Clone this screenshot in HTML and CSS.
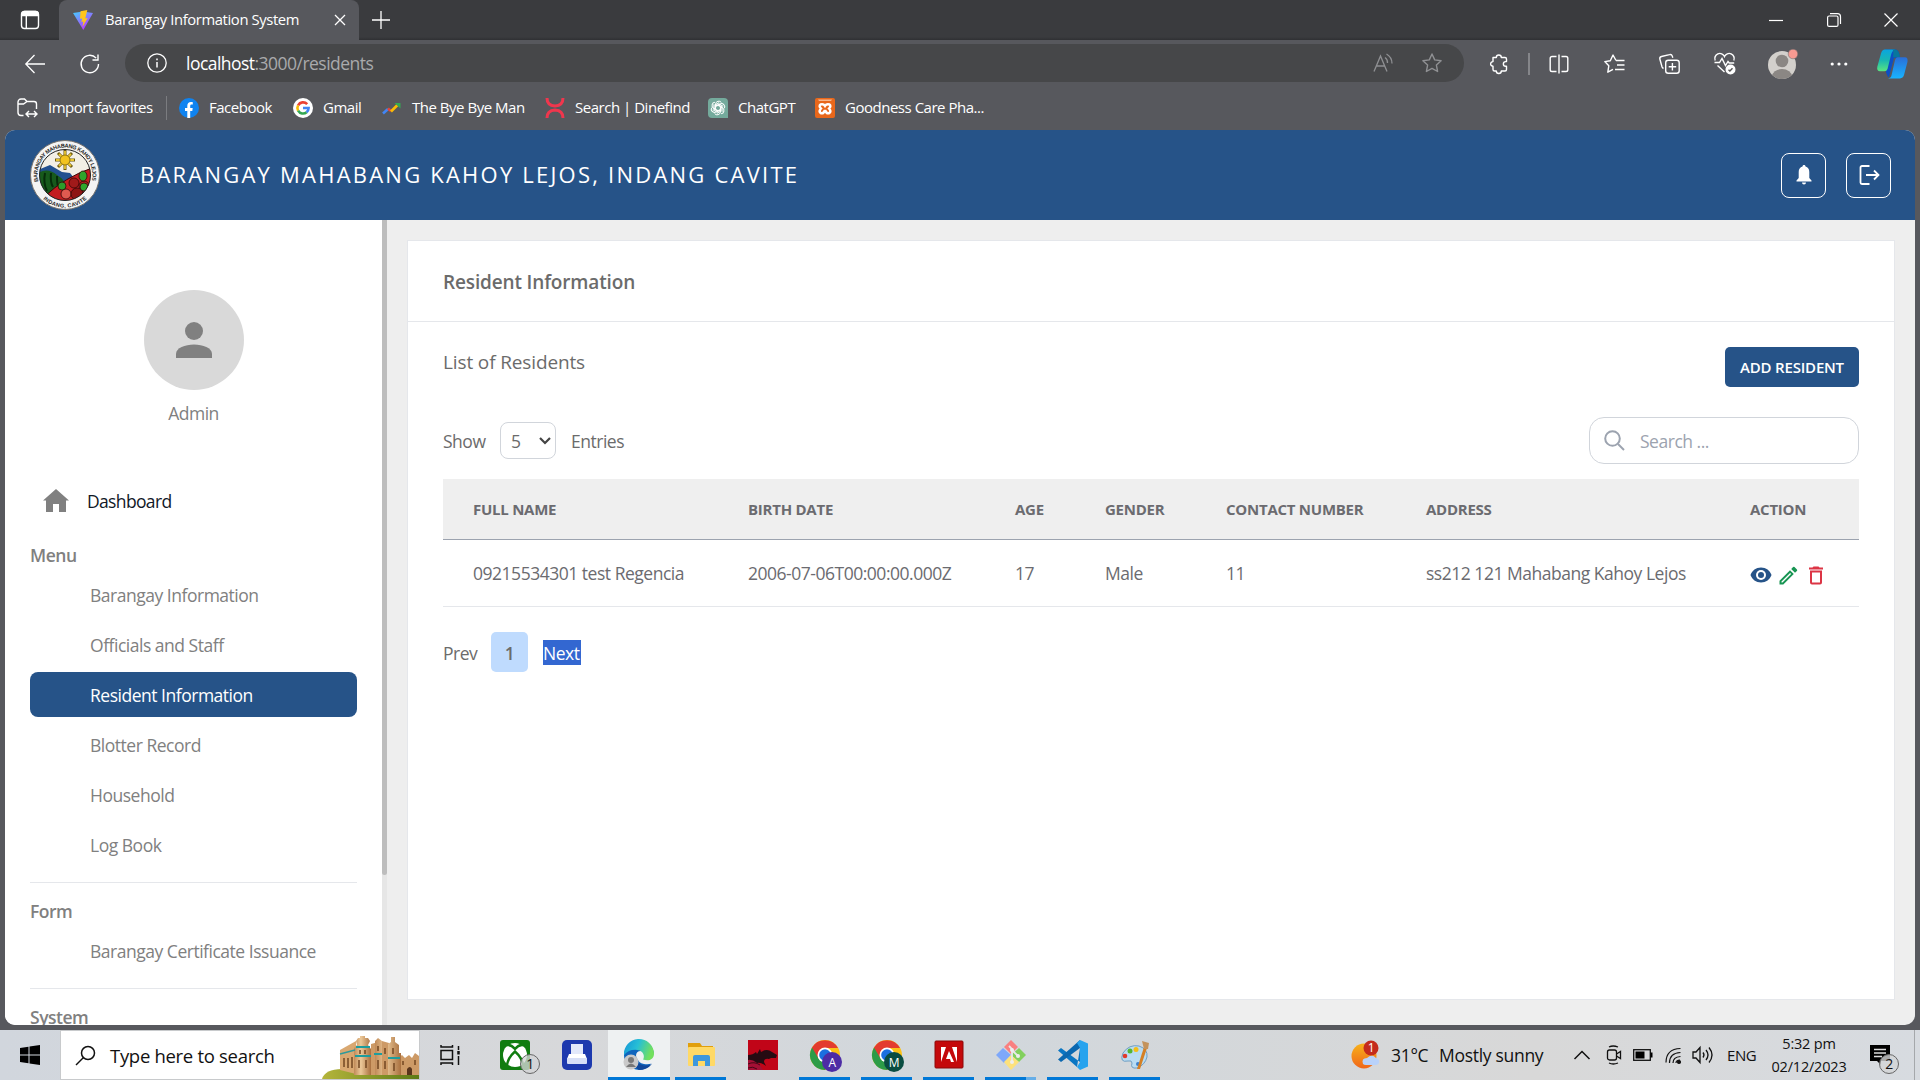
FILE: index.html
```html
<!DOCTYPE html>
<html lang="en">
<head>
<meta charset="utf-8">
<title>Barangay Information System</title>
<link rel="stylesheet" href="styles.css">
</head>
<body>
<div class="browser">
  <div class="tabstrip">
    <svg class="tab-actions" width="20" height="20" viewBox="0 0 20 20" fill="none" stroke="#fff" stroke-width="1.4"><rect x="1.5" y="1.5" width="17" height="17" rx="3"/><path d="M2 5.5V4a2.5 2.500 0 0 1 2.500-2.500h11A2.500 2.500 0 0 1 18 4v1.500z" fill="#fff"/><path d="M6.300 5v13"/></svg>
    <div class="tab">
      <svg width="20" height="20" viewBox="0 0 20 20"><defs><linearGradient id="vite" x1="0" y1="0" x2=".6" y2="1"><stop offset="0" stop-color="#41d1ff"/><stop offset="1" stop-color="#bd34fe"/></linearGradient></defs><path d="M0 3l10-1.500L20 3 10.300 20z" fill="url(#vite)"/><path d="M14.300 0L7.500 1.300l-.5 7.500 2.200-.4-.8 3.600 2-.5-1 5.500 5.300-9-2.400.5z" fill="#ffc51c"/></svg>
      <span class="tab-title">Barangay Information System</span>
      <svg class="tab-close" width="12" height="12" viewBox="0 0 12 12" stroke="#fff" stroke-width="1.300"><path d="M1 1l10 10M11 1L1 11"/></svg>
    </div>
    <svg class="new-tab" width="18" height="18" viewBox="0 0 18 18" stroke="#fff" stroke-width="1.300"><path d="M9 0v18M0 9h18"/></svg>
    <div class="window-buttons">
      <svg width="14" height="14" viewBox="0 0 14 14" stroke="#fff" stroke-width="1.200"><path d="M0 7.500h14"/></svg>
      <svg width="14" height="14" viewBox="0 0 14 14" fill="none" stroke="#fff" stroke-width="1.200"><rect x=".6" y="3" width="10.400" height="10.400" rx="1.500"/><path d="M3 .7h7.500a3 3 0 0 1 3 3V11"/></svg>
      <svg width="14" height="14" viewBox="0 0 14 14" stroke="#fff" stroke-width="1.200"><path d="M.5.5l13 13M13.500.5l-13 13"/></svg>
    </div>
  </div>

  <div class="toolbar">
    <svg class="nav-back" width="20" height="20" viewBox="0 0 20 20" fill="none" stroke="#fff" stroke-width="1.300"><path d="M20 10H1M9.500 1L.8 10l8.700 9"/></svg>
    <svg class="nav-reload" width="20" height="20" viewBox="0 0 20 20" fill="none" stroke="#fff" stroke-width="1.400"><path d="M18.500 10a8.700 8.700 0 1 1-2.300-5.900M18 .5v5.500h-5.500"/></svg>
    <div class="address">
      <svg width="20" height="20" viewBox="0 0 20 20" fill="none" stroke="#fff" stroke-width="1.300"><circle cx="10" cy="10" r="9.200"/><path d="M10 9v5.500M10 5.500v1.700" stroke-width="1.500"/></svg>
      <span class="url"><span class="host">localhost</span>:3000/residents</span>
      <svg class="read-aloud" width="22" height="20" viewBox="0 0 22 20" fill="none" stroke="#8f9093" stroke-width="1.300"><path d="M1 18.500L7.500 3 14 18.500M3.300 13h8.500M12 4.500a6 6 0 0 1 2.500 5.500M13.500 1a11 11 0 0 1 5.500 9.500"/></svg>
      <svg width="20" height="20" viewBox="0 0 20 20" fill="none" stroke="#8f9093" stroke-width="1.400" stroke-linejoin="round"><path d="M10 1l2.700 5.900 6.400.8-4.700 4.400 1.200 6.400L10 15.400l-5.600 3.100 1.200-6.400L.9 7.700l6.400-.8z"/></svg>
    </div>
    <div class="tools">
      <svg class="extensions" width="20" height="22" viewBox="0 0 20 22" fill="none" stroke="#fff" stroke-width="1.400" stroke-linejoin="round"><path d="M4 4.500h3.300a2.500 2.500 0 0 1 5 0H16q1.500 0 1.500 1.500v2.600h-.8a2.300 2.300 0 0 0 0 4.700h.8v3.200q0 1.500-1.500 1.500h-3.700a2.500 2.500 0 0 1-5 0H5.500Q4 18 4 16.500v-3.200a2.300 2.300 0 1 1 0-4.700z"/></svg>
      <i class="tool-divider"></i>
      <svg class="split" width="20" height="20" viewBox="0 0 20 20" fill="none" stroke="#fff" stroke-width="1.400"><path d="M7.500 2.500H3A1.800 1.800 0 0 0 1.200 4.300v11.400A1.800 1.800 0 0 0 3 17.500h4.500M12.500 2.500H17a1.800 1.800 0 0 1 1.800 1.800v11.400a1.800 1.800 0 0 1-1.800 1.800h-4.500M10 .5v19"/></svg>
      <svg class="starred" width="21" height="20" viewBox="0 0 21 20" fill="none" stroke="#fff" stroke-width="1.400" stroke-linejoin="round"><path d="M12 6.500L9 1 6.300 6.800.8 7.600l4 4.200-1 6.400L9 15.300M12 6.500h8.500M13 11h7.500M11 15.500h9.500"/></svg>
      <svg class="collections" width="21" height="20" viewBox="0 0 21 20" fill="none" stroke="#fff" stroke-width="1.400"><rect x="6.700" y="6.200" width="13.500" height="13" rx="2.500"/><path d="M13.400 9v7.500M9.700 12.700h7.500M4.500 14.500A3 3 0 0 1 3 12.800L.9 5.300A2.300 2.300 0 0 1 2.500 2.500l8-1.900a2.300 2.300 0 0 1 2.800 1.500l.5 1.700"/></svg>
      <svg class="essentials" width="22" height="22" viewBox="0 0 22 22" fill="none" stroke="#fff" stroke-width="1.400"><path d="M1.200 7.500A5 5 0 0 1 10.500 3.500 5 5 0 0 1 19.800 7.500M.5 9.500h5L8 5.500l3.500 7 2.500-4 1.200 1.500h5M3.500 12.500l7 6.500"/><circle cx="16.500" cy="16.500" r="4.300" fill="#fff"/><path d="M14.500 16.700l1.400 1.300 2.600-2.800" stroke="#555"/></svg>
      <svg class="profile-face" width="30" height="32" viewBox="0 0 30 32"><defs><clipPath id="face"><circle cx="14" cy="17" r="14"/></clipPath></defs><circle cx="14" cy="17" r="14" fill="#d3d0cc"/><g clip-path="url(#face)" fill="#8b8784"><circle cx="14" cy="13" r="6.300"/><ellipse cx="14" cy="28.500" rx="10" ry="7.500"/></g><circle cx="25" cy="6" r="4.800" fill="#f79a92" stroke="#666" stroke-width=".5"/></svg>
      <svg class="more" width="18" height="6" viewBox="0 0 18 6" fill="#fff"><circle cx="2.200" cy="3" r="1.600"/><circle cx="9" cy="3" r="1.600"/><circle cx="15.800" cy="3" r="1.600"/></svg>
      <svg class="copilot" width="31" height="30" viewBox="0 0 31 27" preserveAspectRatio="none"><defs><linearGradient id="cpa" x1="0" y1="0" x2="0" y2="1"><stop offset="0" stop-color="#0aa5e0"/><stop offset=".5" stop-color="#19b7b2"/><stop offset="1" stop-color="#5be57f"/></linearGradient><linearGradient id="cpb" x1="0" y1="0" x2="0" y2="1"><stop offset="0" stop-color="#2a6ed8"/><stop offset="1" stop-color="#18b4ff"/></linearGradient></defs><path d="M8 .5h11q3 .5 4 7l-6 .5-5 17q-1 1.500-3-4L9 17z" fill="#0d4fc4"/><path d="M8 .5h10q-3 1-4 5L10.500 18q-.8 2-3 2H3q-3.500 0-2.700-4L4 4Q5 .5 8 .5z" fill="url(#cpa)"/><path d="M18 .5q4 0 5 7h-7q1-7-1-7z" fill="#08779d"/><path d="M20.500 7.500H28q3 0 2.500 4L27 23.500q-1 3-4 3H11q3 0 3.600-3L18 10q.8-2.500 2.500-2.500z" fill="url(#cpb)"/></svg>
    </div>
  </div>

  <div class="favorites">
    <div class="fav f1"><svg width="21" height="20" viewBox="0 0 21 20" fill="none" stroke="#fff" stroke-width="1.400"><path d="M6.500 17.500H4A3 3 0 0 1 1 14.500V4A3 3 0 0 1 4 1h3.500L10 3.500h7A2.500 2.500 0 0 1 19.500 6v5M1 6h5.500L10 3.500M9 16h11M12 13l-3 3 3 3M17 13l3 3-3 3"/></svg><span>Import favorites</span></div>
    <i class="fav-divider"></i>
    <div class="fav f2"><svg width="20" height="20" viewBox="0 0 20 20"><circle cx="10" cy="10" r="10" fill="#0f83f0"/><path d="M8.300 20v-7H6v-3h2.300V8c0-2.500 1.400-3.900 3.600-3.900 1 0 1.900.2 1.900.2v2.300h-1.200c-1.100 0-1.400.7-1.400 1.500V10h2.500l-.4 3h-2.100v7z" fill="#fff"/></svg><span>Facebook</span></div>
    <div class="fav f3"><svg width="20" height="20" viewBox="0 0 20 20" fill="none" stroke-width="2.600"><circle cx="10" cy="10" r="10" fill="#fff"/><path d="M14.200 6.200A5.600 5.600 0 0 0 5.100 7.300" stroke="#ea4335"/><path d="M5.100 7.300a5.600 5.600 0 0 0 0 5.400" stroke="#fbbc05"/><path d="M5.100 12.700a5.600 5.600 0 0 0 8.500 1.500" stroke="#34a853"/><path d="M13.600 14.200a5.600 5.600 0 0 0 2-4.200H10" stroke="#4285f4"/></svg><span>Gmail</span></div>
    <div class="fav f4"><svg width="20" height="20" viewBox="0 0 20 20" fill="none" stroke-width="2.600"><path d="M1 15.500l5-4.500" stroke="#4285f4"/><path d="M6 10.500l3 2.500" stroke="#ea4335"/><path d="M9 13.500l6.500-6.500" stroke="#fbbc05"/><path d="M12.500 5h6v5.500" fill="#34a853" stroke="none"/></svg><span>The Bye Bye Man</span></div>
    <div class="fav f5"><svg width="20" height="20" viewBox="0 0 20 20" fill="none" stroke="#f0364d" stroke-width="3"><path d="M2 0Q2 7.500 10 8 18 7.500 18 0M2 20q0-7.500 8-8 8 .5 8 8"/></svg><span>Search | Dinefind</span></div>
    <div class="fav f6"><svg width="20" height="20" viewBox="0 0 20 20" fill="none" stroke="#fff" stroke-width="1"><path d="M4 0h12a4 4 0 0 1 4 4v16H4a4 4 0 0 1-4-4V4a4 4 0 0 1 4-4z" fill="#74aa9c" stroke="none"/><g id="knot"><path id="petal" d="M7.600 11.400V6.100a3.200 3.200 0 0 1 5.800-1.600M7.600 8l3.600-2 4 2.300"/><use href="#petal" transform="rotate(60 10 10)"/><use href="#petal" transform="rotate(120 10 10)"/></g><use href="#knot" transform="rotate(180 10 10)"/></svg><span>ChatGPT</span></div>
    <div class="fav f7"><svg width="20" height="20" viewBox="0 0 20 20" fill="none"><rect width="20" height="20" rx="2" fill="#e8671b"/><path d="M3 1.500h14L16 3H4z" fill="#f7b78c"/><path d="M5.500 6.500q3-1 4.500 1.500 1.500-2.500 4.500-1.500 2 1.500-.5 4 2.500 2.500.5 4.500-3 1-4-2h-1q-1 3-4 2-2-2 .5-4.500-2.500-2.500-.5-4z" stroke="#fff" stroke-width="2.400"/></svg><span>Goodness Care Pha...</span></div>
  </div>

  <div class="page">
    <header class="site-header">
      <svg class="seal" width="70" height="70" viewBox="0 0 70 70"><defs><clipPath id="inner"><circle cx="35" cy="35" r="25.500"/></clipPath><path id="arcTop" d="M8.500 42.500A27.500 27.500 0 1 1 61.500 42.500"/><path id="arcBottom" d="M9 54.500A32.500 32.500 0 0 0 61 54.500"/></defs>
        <circle cx="35" cy="35" r="34.500" fill="#f4f4f4" stroke="#77736e"/>
        <g clip-path="url(#inner)"><rect width="70" height="70" fill="#f3efe6"/><path d="M8 30l12-5 12 7 8 1 4 5v30H8z" fill="#22508f"/><path d="M8 33q10-6 19 2 8 5 8 10L22 62H8z" fill="#175a1c"/><path d="M15 33q-2 10 2 18M21 33q-1 9 2 14M27 36q0 8 1 10" stroke="#062c0a" stroke-width="2" fill="none"/><path d="M14 57Q35 37 62 28v34H22z" fill="#c31d20" stroke="#3a0808"/><g stroke="#350808" stroke-width=".8"><circle cx="44" cy="43" r="5" fill="#a01a1a"/><circle cx="54" cy="46" r="5" fill="#b51d1d"/><circle cx="36" cy="54" r="5" fill="#e05a50"/><circle cx="47" cy="54" r="6" fill="#8e1414"/><ellipse cx="53" cy="36" rx="4" ry="5" fill="#2fa52c"/><circle cx="32" cy="46" r="4" fill="#2c9c2b"/><ellipse cx="54" cy="47" rx="4" ry="4" fill="#2fa52c"/></g><path d="M35 10v20M25 20h20M28 13l14 14M42 13L28 27" stroke="#6d5a10" stroke-width="3"/><path d="M35 11v18M26 20h18M29 14l12 12M41 14L29 26" stroke="#e8c431" stroke-width="1.800"/><circle cx="35" cy="20" r="5" fill="#f2c31d" stroke="#8d7210"/></g>
        <circle cx="35" cy="35" r="25.500" fill="none" stroke="#222"/>
        <g class="seal-text"><text><textPath href="#arcTop" startOffset="1" textLength="98">BARANGAY MAHABANG KAHOY LEJOS</textPath></text><text><textPath href="#arcBottom" startOffset="6" textLength="48">INDANG, CAVITE</textPath></text></g></svg>
      <h1>BARANGAY MAHABANG KAHOY LEJOS, INDANG CAVITE</h1>
      <div class="header-button"><svg width="20" height="22" viewBox="0 0 20 22" fill="#fff"><path d="M10 1c1 0 1.500.7 1.500 1.600C14 3.300 15.300 5.500 15.300 8v6l2.200 2.500v1h-15v-1L4.700 14V8c0-2.500 1.300-4.700 3.800-5.400C8.500 1.700 9 1 10 1zM8 18.600h4a2 2 0 0 1-4 0z"/></svg></div>
      <div class="header-button"><svg width="22" height="22" viewBox="0 0 22 22" fill="none" stroke="#fff" stroke-width="1.800"><path d="M11.500 2H4a1.500 1.500 0 0 0-1.500 1.500v15A1.500 1.500 0 0 0 4 20h7.500M8 11h12M16 6.500l4.500 4.500-4.500 4.500"/></svg></div>
    </header>
    <div class="site-body">
      <aside class="sidebar">
        <div class="sidebar-content">
          <div class="avatar"><svg width="36" height="36" viewBox="0 0 36 36" fill="#808080"><circle cx="18" cy="9" r="9"/><path d="M0 36v-4c0-6 9-9.500 18-9.500S36 26 36 32v4z"/></svg></div>
          <p class="admin">Admin</p>
          <div class="dashboard"><svg width="26" height="23" viewBox="0 0 26 23" fill="#808080"><path d="M13 0l13 11.500h-3V23h-7v-8h-6v8H3V11.500H0z"/></svg><span>Dashboard</span></div>
          <h2 class="group">Menu</h2>
          <nav class="menu">
            <a>Barangay Information</a>
            <a>Officials and Staff</a>
            <a class="active">Resident Information</a>
            <a>Blotter Record</a>
            <a>Household</a>
            <a>Log Book</a>
          </nav>
          <hr>
          <h2 class="group second">Form</h2>
          <nav class="menu"><a>Barangay Certificate Issuance</a></nav>
          <hr>
          <h2 class="group second">System</h2>
        </div>
        <div class="scrollbar"><div class="thumb"></div></div>
      </aside>
      <main class="content">
        <section class="card">
          <h2 class="card-title">Resident Information</h2>
          <div class="card-body">
            <div class="list-head"><h3>List of Residents</h3><button class="add">ADD RESIDENT</button></div>
            <div class="filters">
              <span class="show">Show</span>
              <span class="select"><span>5</span><svg width="12" height="8" viewBox="0 0 12 8" fill="none" stroke="#444" stroke-width="2.200"><path d="M1 1l5 5 5-5"/></svg></span>
              <span class="entries">Entries</span>
              <div class="search"><svg width="21" height="21" viewBox="0 0 21 21" fill="none" stroke="#9ca3af" stroke-width="2"><circle cx="8.500" cy="8.500" r="7.300"/><path d="M14 14l6 6"/></svg><span>Search ...</span></div>
            </div>
            <table>
              <colgroup><col class="c1"><col class="c2"><col class="c3"><col class="c4"><col class="c5"><col class="c6"><col class="c7"></colgroup>
              <thead><tr><th>FULL NAME</th><th>BIRTH DATE</th><th>AGE</th><th>GENDER</th><th>CONTACT NUMBER</th><th>ADDRESS</th><th>ACTION</th></tr></thead>
              <tbody><tr><td>09215534301 test Regencia</td><td>2006-07-06T00:00:00.000Z</td><td>17</td><td>Male</td><td>11</td><td>ss212 121 Mahabang Kahoy Lejos</td>
                <td><div class="actions">
                  <svg width="22" height="16" viewBox="0 0 22 16"><path d="M11 .5C6 .5 2 3.600.5 8 2 12.400 6 15.500 11 15.500S20 12.400 21.500 8C20 3.600 16 .5 11 .5z" fill="#265388"/><circle cx="11" cy="8" r="5" fill="#fff"/><circle cx="11" cy="8" r="3" fill="#265388"/></svg>
                  <svg width="19" height="19" viewBox="0 0 19 19" fill="#189553"><path fill-rule="evenodd" d="M.5 14.700V18.500h3.800L14.800 8l-3.800-3.800zM3.500 16.600h-1v-1L11.100 7l1 1zM17.900 4.900a1 1 0 0 0 0-1.400L15.500 1.100a1 1 0 0 0-1.400 0l-1.900 1.900L16 6.800z"/></svg>
                  <svg width="14" height="19" viewBox="0 0 14 19" fill="#dc3545"><path fill-rule="evenodd" d="M1 16.500a2 2 0 0 0 2 2h8a2 2 0 0 0 2-2V4.500H1zM3 6.500h8v10H3zM10.500 1.500l-1-1h-5l-1 1H0v2h14v-2z"/></svg>
                </div></td></tr></tbody>
            </table>
            <div class="pager"><span class="prev">Prev</span><b>1</b><span class="next">Next</span></div>
          </div>
        </section>
      </main>
    </div>
  </div>
</div>

<footer class="taskbar">
  <div class="start"><svg width="20" height="20" viewBox="0 0 20 20"><path d="M0 3l8.500-1.200v7.700H0zM9.500 1.600L20 0v9.500H9.500zM0 10.500h8.500v7.700L0 17zM9.500 10.500H20V20L9.500 18.400z"/></svg></div>
  <div class="tb-search">
    <svg width="21" height="21" viewBox="0 0 21 21" fill="none" stroke="#111" stroke-width="1.500"><circle cx="13" cy="8" r="6.500"/><path d="M8.500 12.500L1 20"/></svg>
    <span>Type here to search</span>
    <svg class="castle" width="97" height="43" viewBox="0 0 97 43"><defs><linearGradient id="stone" x1="0" y1="0" x2="1" y2="0"><stop offset="0" stop-color="#c08a58"/><stop offset=".4" stop-color="#ecc999"/><stop offset="1" stop-color="#a9703f"/></linearGradient><linearGradient id="grass" x1="0" y1="0" x2="1" y2="0"><stop offset="0" stop-color="#b5b53c"/><stop offset="1" stop-color="#5d7a16"/></linearGradient></defs><path d="M0 43q3-10 20-10l77 5v5z" fill="url(#grass)"/><path d="M18 14l16-9v33l-16-4z" fill="#d9a871"/><path d="M49 8l11-3 7 2v32H49zM76 22l4-3 3 3 4-3 3 3 3-5 4 3v19H76z" fill="#cd9a66"/><path d="M34 5l2-3h2V0h5v2h3l2 3-2 4 3 4v26H32V12l3-3z" fill="url(#stone)"/><path d="M53 5l3-3 4 3v34h-7zM66 8l3-2V1h4v5l4 3v8h2v22H66z" fill="url(#stone)"/><path d="M34 11h14M33 20h16M52 18h8M66 22h12" stroke="#1d9d9e" stroke-width="1.800"/><path d="M18 18l15-4" stroke="#2d9a9b" stroke-width="1.500"/><path d="M22 22v9M26 22v10M30 21v11M38 14v4M43 14v4M37 24v8M44 24v8M56 10v5M63 12v6M71 12v6M56 24v9M72 27v8M63 25v8M81 25v4M93 24v5" stroke="#734722" stroke-width="1.500"/><path d="M85 39v-6q3-4 5 0v6z" fill="#59351c"/></svg>
  </div>
  <div class="task-view"><svg width="20" height="20" viewBox="0 0 20 20" fill="none" stroke="#111" stroke-width="1.500"><rect x="1" y="5.500" width="11.500" height="9"/><path d="M1 0v2h11.500V0M1 20v-2h11.500v2M18.500 1v4M18.500 11v9"/><path d="M18.500 6v3.500" stroke-width="2.500"/></svg></div>
  <div class="apps">
    <div class="app"><svg width="30" height="30" viewBox="0 0 30 30"><rect width="30" height="30" rx="3" fill="#107c10"/><circle cx="15" cy="15" r="12" fill="#fff"/><path d="M5.500 5.500q5-2 9.500 3.500Q19.500 3.500 24.500 5.500M7 26q.5-8 8-14.500Q22.500 18 23 26" fill="none" stroke="#107c10" stroke-width="2.400"/></svg><span class="badge">1</span></div>
    <div class="app"><svg width="30" height="30" viewBox="0 0 30 30"><rect width="30" height="30" rx="5" fill="#1d39ae"/><path d="M9 4h12v10H9z" fill="#e2e8fa"/><path d="M7 14h16l2 5H5z" fill="#fff"/><rect x="5" y="18" width="20" height="6" rx="1" fill="#d7dff7"/></svg></div>
    <div class="app current running"><svg width="30" height="30" viewBox="0 0 30 30"><defs><linearGradient id="ea" x1="0" y1="0" x2="1" y2=".3"><stop offset="0" stop-color="#1395d8"/><stop offset=".5" stop-color="#27bfd6"/><stop offset="1" stop-color="#72e05e"/></linearGradient></defs><circle cx="15" cy="15" r="15" fill="#0f65bd"/><path d="M12 16q0-5 5-5l13 3v8q-3 3-10 2-6-1-8-8z" fill="#eef1f2"/><path d="M0 15A15 15 0 0 1 30 13c.5 7-6 8.500-11 6.500C21 17 20 11 13.500 10Q5 9 0 15z" fill="url(#ea)"/><path d="M12 16q-1 8 8 9.500 5 .3 8-1.500Q23 30 15 30q-9-6-3-14z" fill="#10489b"/><circle cx="7" cy="22" r="7.500" fill="#c9c9c9"/><circle cx="7" cy="20" r="3" fill="#777"/><path d="M2 27q5-7 10 0z" fill="#777"/></svg></div>
    <div class="app running"><svg width="30" height="30" viewBox="0 0 30 30"><path d="M2 3h12l2 3h11v10H2z" fill="#e19f0c"/><rect x="2" y="7" width="27" height="19" rx="1" fill="#ffd966"/><path d="M7 26V17q0-2 2-2h13q2 0 2 2v9h-5v-5h-7v5z" fill="#3d97dd"/></svg></div>
    <div class="app"><svg width="30" height="30" viewBox="0 0 30 30"><rect width="30" height="30" fill="#c10518"/><path d="M0 20h9l6 10H0z" fill="#a50f35"/><path d="M0 15q5 0 8-3l1 2 3-5 1 3q6-4 11 0l5 3-1 3-5 0-2 1q-5-1-5 3l2 4q-5-4-9-3-5-4-9-3z" fill="#260b12"/><path d="M0 24q6-3 12 1M0 28q5-2 9 1" stroke="#470716" fill="none"/></svg></div>
    <div class="app running"><svg class="chrome" width="34" height="34" viewBox="0 0 34 34"><g id="chrome"><circle cx="16" cy="15" r="15" fill="#fbc116"/><path d="M16 15L3 7.500A15 15 0 0 0 16 30l7-11z" fill="#2c9c47"/><path d="M3 7.500A15 15 0 0 1 29 8H16l-6.500 10.500z" fill="#e33b2e"/><circle cx="16" cy="15" r="7.500" fill="#fff"/><circle cx="16" cy="15" r="5.800" fill="#1b6fe0"/></g><circle cx="23" cy="22" r="10" fill="#4d2ca5"/><text x="23" y="26.500" class="profile">A</text></svg></div>
    <div class="app running"><svg class="chrome" width="34" height="34" viewBox="0 0 34 34"><use href="#chrome"/><circle cx="23" cy="22" r="10" fill="#0a4d42"/><text x="23" y="26.500" class="profile">M</text></svg></div>
    <div class="app running"><svg width="30" height="30" viewBox="0 0 30 30"><rect x="1" y="1" width="28" height="27" rx="1" fill="#c4090b" stroke="#8c0808"/><path d="M7 22V7h5zM23 22V7h-5zM15 11l5 11h-3l-1-3h-4z" fill="#fff"/></svg></div>
    <div class="app running grouped"><svg width="30" height="30" viewBox="0 0 30 30"><path d="M15 0l7 7-7 7-7-7z" fill="#f98080"/><path d="M7 8l8 7-7 8-8-8z" fill="#7ea8fa"/><path d="M23 8l7 7-7 7-8-7z" fill="#82d05d"/><path d="M15 15l8 7-8 8-7-8z" fill="#fde17c"/><path d="M13 6l3 3v13M16 10l6 6" stroke="#e8e8e8" stroke-width="1.800" fill="none"/><circle cx="16" cy="10" r="2" fill="#eee"/><circle cx="16" cy="22" r="2" fill="#eee"/><circle cx="22" cy="16" r="2" fill="#eee"/></svg></div>
    <div class="app running"><svg width="30" height="30" viewBox="0 0 30 30"><path d="M22 8v14L3 8 0 10.500 19 27z" fill="#0a76c3"/><path d="M0 19.500L3 22 22 8V0L0 19.500z" fill="#0b68b0"/><path d="M22 0l8 3.500v23L22 30l-3-3 3-5V8l-3-5z" fill="#27a3ee"/></svg></div>
    <div class="app running"><svg width="30" height="30" viewBox="0 0 30 30"><path d="M3 13Q9 4 19 6q9 3 8 11-2 8-10 11-7 1-5-5 0-3-4-2-9 2-5-8z" fill="#b9dcf2" stroke="#6f9fc4"/><circle cx="5" cy="16" r="2.300" fill="#e23a2c"/><circle cx="10" cy="11" r="2.500" fill="#55b535"/><circle cx="16" cy="9.500" r="2.500" fill="#f3be18"/><circle cx="18" cy="24" r="2" fill="#3a80cf"/><path d="M24 7l3 1-7 21-3 0z" fill="#d58024"/><path d="M22 1l7 2-1 6-4 0z" fill="#c4935c"/></svg></div>
  </div>
  <div class="tray">
    <svg class="weather" width="30" height="30" viewBox="0 0 30 30"><defs><linearGradient id="sun" x1="0" y1="0" x2="0" y2="1"><stop offset="0" stop-color="#f7b21a"/><stop offset="1" stop-color="#f0661a"/></linearGradient></defs><circle cx="13" cy="16" r="12.500" fill="url(#sun)"/><path d="M12 24q-2-6 4-6 5-5 9 0 4 1 3 5-1 2-3 2H15q-2 0-3-1z" fill="#b9d2fa"/><circle cx="20" cy="8" r="7.500" fill="#c42b1c"/><text x="20" y="12" class="alert">1</text></svg>
    <span class="temp">31°C</span><span class="cond">Mostly sunny</span>
    <svg class="up" width="16" height="10" viewBox="0 0 16 10" fill="none" stroke="#111" stroke-width="1.500"><path d="M.5 9L8 1.500 15.500 9"/></svg>
    <svg class="cam" width="16" height="20" viewBox="0 0 16 20" fill="none" stroke="#111" stroke-width="1.300"><rect x="1.500" y="5" width="9" height="10" rx="2"/><path d="M10.500 9l4-2.500v7l-4-2.500M3 2q4-2 9 0M3 18q4 2 9 0"/></svg>
    <svg class="battery" width="20" height="12" viewBox="0 0 20 12"><rect x=".7" y=".7" width="16.600" height="10.600" fill="none" stroke="#111" stroke-width="1.300"/><path d="M2.500 2.500h9v7h-9zM17.500 3.500h2v5h-2z"/></svg>
    <svg class="wifi" width="17" height="17" viewBox="0 0 17 17" fill="none" stroke="#111" stroke-width="1.200"><path d="M1 15.500Q1 2 15.500 1.500M4.500 16q0-10 11-10.500M8 16q0-6 7.500-6.500M11 16q0-3 4-3"/><circle cx="14" cy="15" r="1.500" fill="#111"/></svg>
    <svg class="sound" width="21" height="18" viewBox="0 0 21 18" fill="none" stroke="#111" stroke-width="1.300"><path d="M1 6h3l4-4.500v15L4 12H1zM11 6.500q2 2.500 0 5M14 4q4 5 0 10M17 1.500q6 7.500 0 15"/></svg>
    <span class="eng">ENG</span>
    <div class="clock"><span>5:32 pm</span><span>02/12/2023</span></div>
    <div class="notes"><svg width="20" height="20" viewBox="0 0 20 20"><path d="M0 0h20v16h-9v4l-4-4H0z"/><path d="M4 4.500h12M4 8h12M4 11.500h8" stroke="#ddd" stroke-width="1.300"/></svg><span class="badge">2</span></div>
    <i class="peek"></i>
  </div>
</footer>
</body>
</html>
```
FILE: styles.css
```css
* { box-sizing: border-box; margin: 0; padding: 0; }
body { width: 1920px; height: 1080px; overflow: hidden; background: #57585d; color: #6b6b6b; font-family: "Open Sans", "Noto Sans", sans-serif; font-size: 17.500px; letter-spacing: -.48px; white-space: nowrap; }
svg { flex: none; display: block; overflow: visible; }
h1, h2, h3 { font-weight: 400; font-size: inherit; }

.browser { height: 1030px; padding-bottom: 5px; display: flex; flex-direction: column; }
.tabstrip { height: 40px; flex: none; display: flex; align-items: center; background: linear-gradient(#3a3b3e 37px, #2f3033 40px); color: #fff; }
.tab-actions { margin-left: 20px; }
.tab { margin-left: 19px; width: 300px; height: 40px; padding-left: 14px; display: flex; align-items: center; border-radius: 8px 8px 0 0; background: #57585d; font-size: 14.800px; letter-spacing: -.38px; }
.tab-title { margin-left: 12px; width: 229px; padding-bottom: 2px; }
.new-tab { margin-left: 13px; }
.window-buttons { margin-left: auto; padding-right: 22px; display: flex; gap: 43.500px; }

.toolbar { height: 48px; flex: none; display: flex; align-items: center; color: #a9aaac; }
.nav-back { margin-left: 25px; }
.nav-reload { margin-left: 35px; }
.address { margin: 0 0 2px 25px; width: 1339px; height: 38px; padding-left: 22px; display: flex; align-items: center; border-radius: 19px; background: #464749; }
.url { margin-left: 19px; width: 1187px; letter-spacing: -.53px; }
.host { color: #fff; }
.read-aloud { margin-right: 27px; }
.tools { flex: 1; padding-left: 25px; display: flex; align-items: center; }
.tool-divider { width: 2px; height: 22px; margin-left: 19px; background: #85868a; }
.split { margin-left: 19px; }
.starred { margin-left: 35px; }
.collections, .essentials { margin-left: 34px; }
.profile-face, .more { margin-left: 32px; }
.copilot { margin-left: 29px; }

.favorites { height: 42px; flex: none; padding: 0 0 3px 17px; display: flex; align-items: center; color: #fff; font-size: 15px; }
.fav { display: flex; align-items: center; gap: 10px; }
.fav span { padding-bottom: 2px; }
.f1 { width: 149px; }
.fav-divider { width: 1px; height: 24px; margin-right: 12px; background: #7b7c80; }
.f2 { width: 114px; }
.f3 { width: 89px; }
.f4 { width: 163px; }
.f5 { width: 163px; }
.f6 { width: 107px; }

.page { flex: 1; min-height: 0; margin: 0 5px; display: flex; flex-direction: column; overflow: hidden; border-radius: 10px; background: #eee; }
.site-header { height: 90px; flex: none; padding: 0 24px 0 25px; display: flex; align-items: center; background: #265388; color: #fff; }
.site-header h1 { margin: 0 auto 0 40px; padding-bottom: 2px; font-size: 22px; letter-spacing: 2.220px; }
.seal-text { font: 700 5.500px "Liberation Sans", sans-serif; letter-spacing: 0; fill: #222; }
.header-button { width: 45px; height: 45px; margin-left: 20px; display: flex; align-items: center; justify-content: center; border: 1px solid #fff; border-radius: 8px; }
.site-body { flex: 1; min-height: 0; display: flex; }
.sidebar { width: 382px; flex: none; display: flex; overflow: hidden; }
.sidebar-content { width: 377px; padding: 70px 25px 0; background: #fff; color: #808080; }
.scrollbar { width: 5px; background: #e6e6e6; }
.thumb { height: 655px; border-radius: 0 0 3px 3px; background: #bdbdbd; }
.avatar { width: 100px; height: 100px; margin: 0 auto; display: flex; align-items: center; justify-content: center; border-radius: 50%; background: #d9d9d9; }
.admin { height: 24px; margin-top: 11px; line-height: 24px; text-align: center; }
.dashboard { height: 26px; margin-top: 62px; padding-left: 13px; display: flex; align-items: center; gap: 18px; color: #111827; letter-spacing: -.65px; }
.dashboard span { padding-top: 2px; }
.group { height: 30px; margin-top: 27px; line-height: 30px; font-weight: 600; }
.menu { display: flex; flex-direction: column; gap: 5px; padding-top: 2px; }
.menu a { height: 45px; padding-left: 60px; line-height: 46px; border-radius: 8px; }
.menu .active { background: #265388; color: #fff; }
hr { height: 1px; margin-top: 15px; border: 0; background: #e5e7eb; }
.group.second { margin-top: 13px; }

.content { flex: 1; padding: 20px 20px 26px; }
.card { height: 760px; border: 1px solid #e5e7eb; background: #fff; }
.card-title { height: 81px; padding-left: 35px; line-height: 82px; border-bottom: 1px solid #e5e7eb; font-size: 19px; font-weight: 600; letter-spacing: -.15px; }
.card-body { padding: 25px 35px 0; }
.list-head { height: 70px; display: flex; justify-content: space-between; }
.list-head h3 { font-size: 19px; line-height: 31px; letter-spacing: -.13px; }
.add { width: 134px; height: 40px; border: 0; border-radius: 5px; background: #265388; color: #fff; font: 600 15px "Open Sans", sans-serif; letter-spacing: -.2px; }
.filters { height: 62px; display: flex; align-items: flex-start; line-height: 48px; }
.show { width: 57px; }
.select { width: 56px; height: 37px; margin: 5px 15px 0 0; padding: 0 4px 0 10px; display: flex; align-items: center; justify-content: space-between; line-height: 36px; border: 1px solid #d1d5db; border-radius: 8px; }
.search { width: 270px; height: 47px; margin-left: auto; padding-left: 14px; display: flex; align-items: center; gap: 15px; border: 1px solid #d1d5db; border-radius: 15px; color: #9ca3af; }
table { width: 1416px; table-layout: fixed; border-collapse: collapse; color: #6b6b70; }
.c1 { width: 275px; } .c2 { width: 267px; } .c3 { width: 90px; } .c4 { width: 121px; } .c5 { width: 200px; } .c6 { width: 324px; } .c7 { width: 139px; }
th, td { padding: 0 0 0 30px; text-align: left; vertical-align: middle; }
th { height: 60px; background: #efefef; border-bottom: 1px solid #9ca3af; font-size: 15px; font-weight: 700; letter-spacing: -.25px; }
td { height: 67px; border-bottom: 1px solid #e5e7eb; }
.actions { display: flex; align-items: center; gap: 7px; padding-top: 5px; }
.actions svg:last-child { margin-left: 4px; }
.pager { height: 40px; margin-top: 25px; display: flex; align-items: center; }
.prev { width: 48px; padding-top: 3px; }
.pager b { width: 37px; height: 40px; line-height: 43px; text-align: center; border-radius: 5px; background: #bfdbfe; font-weight: 600; }
.next { width: 38px; height: 25px; margin: 1px 0 0 15px; line-height: 26px; background: #3367d1; color: #fff; }

.taskbar { height: 50px; display: flex; color: #111; background: linear-gradient(90deg, #d1d6dd, #d7d8da 30%, #d1d7dc 50%, #d8d8d8 80%, #d7dbe0); }
.start { width: 60px; display: flex; align-items: center; justify-content: center; }
.tb-search { width: 360px; padding-left: 14px; display: flex; align-items: center; gap: 14px; background: #fff; border: 1px solid #c8cacc; font-size: 18.500px; letter-spacing: -.3px; }
.castle { margin: 5px 0 0 auto; }
.task-view { width: 64px; padding-left: 20px; display: flex; align-items: center; }
.apps { display: flex; width: 750px; }
.app { position: relative; width: 62px; display: flex; align-items: center; justify-content: center; }
.app.current { background: #eef1f2; }
.app.running::after { content: ""; position: absolute; left: 5px; right: 6px; bottom: 0; height: 3px; background: #0078d7; }
.app.current::after { left: 0; right: 0; }
.app.grouped::after { background: linear-gradient(90deg, #0078d7 41px, #66aee8 41px); }
.chrome { margin: 4px 0 0 2px; }
.badge { position: absolute; width: 20px; height: 20px; left: 36px; top: 24px; line-height: 18px; text-align: center; border: 1px solid #666; border-radius: 50%; background: #d3d5d6cc; font-size: 14px; }
.profile, .alert { fill: #fff; font-size: 12px; text-anchor: middle; }
.tray { flex: 1; display: flex; align-items: center; font-size: 17.500px; letter-spacing: -.3px; }
.weather { margin-left: 117px; }
.temp { width: 48px; margin-left: 10px; }
.cond { width: 135px; }
.cam { margin-left: 16px; }
.battery { margin-left: 11px; }
.wifi { margin-left: 12px; }
.sound { margin-left: 10px; }
.eng { width: 43px; margin-left: 14px; font-size: 15px; letter-spacing: -.4px; }
.clock { width: 78px; display: flex; flex-direction: column; align-items: center; font-size: 14.500px; line-height: 23px; letter-spacing: -.2px; }
.notes { position: relative; margin-left: 22px; }
.notes .badge { left: 9px; top: 9px; }
.peek { width: 1px; height: 50px; margin-left: auto; margin-right: 5px; background: #a5a8ab; }
```
